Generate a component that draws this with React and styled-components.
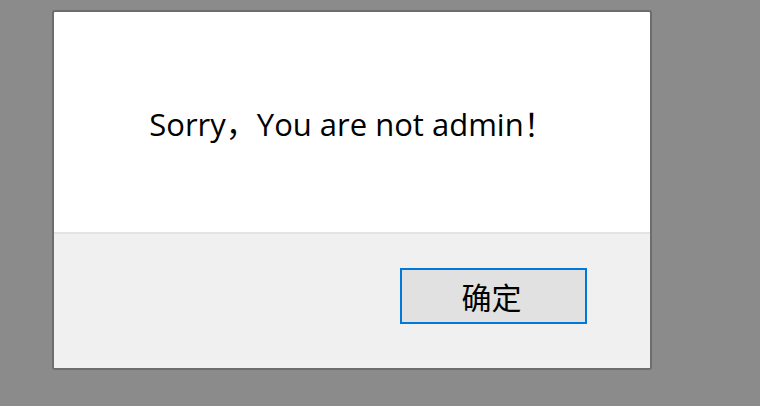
import React from 'react';
import styled, { createGlobalStyle } from 'styled-components';

const GlobalStyle = createGlobalStyle`
  html, body {
    margin: 0;
    padding: 0;
    background: #8b8b8b;
  }
  body {
    font-family: "Open Sans", "Noto Sans CJK SC", sans-serif;
  }
`;

const Page = styled.div`
  width: 760px;
  height: 406px;
  padding: 10px 0 0 52px;
  box-sizing: border-box;
`;

const Dialog = styled.div`
  width: 600px;
  height: 360px;
  box-sizing: border-box;
  border: 2px solid #6d6d6d;
  border-radius: 3px;
  overflow: hidden;
  display: flex;
  flex-direction: column;
  background: #ffffff;
`;

const Body = styled.div`
  height: 220px;
  display: flex;
  align-items: center;
  justify-content: center;
  border-bottom: 2px solid #e3e3e3;
  font-size: 31px;
  color: #000;
`;

const Footer = styled.div`
  flex: 1;
  background: #f0f0f0;
  display: flex;
  align-items: flex-start;
  justify-content: flex-end;
  padding: 34px 63px 0 0;
`;

const Button = styled.button`
  width: 187px;
  height: 56px;
  box-sizing: border-box;
  border: 2px solid #0078d7;
  background: #e1e1e1;
  font-family: "Noto Sans CJK SC", sans-serif;
  font-size: 30px;
  line-height: 1;
  color: #000;
  padding: 0 4px 0 0;
  border-radius: 0;
  cursor: pointer;
`;

export default function App() {
  return (
    <Page>
      <GlobalStyle />
      <Dialog>
        <Body>Sorry，You are not admin！</Body>
        <Footer>
          <Button>确定</Button>
        </Footer>
      </Dialog>
    </Page>
  );
}
